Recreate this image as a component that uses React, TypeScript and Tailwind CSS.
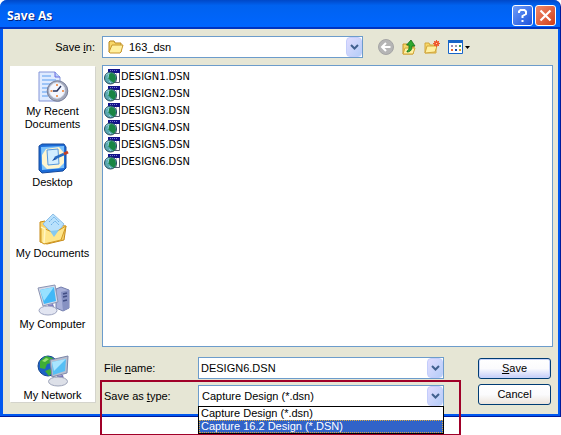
import type { ReactNode } from "react";

const uiFont = "font-['Liberation_Sans',Arial,sans-serif]";
const listFont = "font-['DejaVu_Sans_Condensed','DejaVu_Sans',sans-serif]";

function Chevron() {
  return (
    <span className="pointer-events-none flex h-5 w-4 shrink-0 items-center justify-center rounded-sm border border-[#c3cdfb] bg-linear-to-br from-[#e1dcff] to-[#b4cdf8]">
      <svg width="9" height="6" viewBox="0 0 9 6" fill="none" stroke="#42618f" strokeWidth="2">
        <path d="M1 1l3.500 3.500L8 1" />
      </svg>
    </span>
  );
}

function RecentIcon() {
  return (
    <svg width="32" height="32" viewBox="0 0 32 32">
      <path d="M2 1h16l5 5v24H2z" fill="#dfebff" stroke="#8495d8" />
      <path d="M18 1v5h5" fill="#b8d0fa" stroke="#6c6be0" />
      <path d="M5 5h9M5 9h14M5 13h10M5 17h6M5 21h5M5 25h6" stroke="#86b8f5" strokeWidth="1.500" />
      <circle cx="20.500" cy="20" r="10.300" fill="#a2a8ba" stroke="#757d98" />
      <circle cx="20" cy="19.500" r="7.800" fill="#f4f7ff" stroke="#dce2f0" />
      <path d="M20 13v2M20 24v2M13.500 20h2M25 20h2" stroke="#f08030" strokeWidth="1.500" />
      <path d="M24 15l-4 5h-4" fill="none" stroke="#26335c" strokeWidth="1.500" />
    </svg>
  );
}

function DesktopIcon() {
  return (
    <svg width="32" height="32" viewBox="0 0 32 32">
      <path d="M2 4l3-2 22 0 2 3 0 21-3 3-21 2-3-3z" fill="#1c6cd8" stroke="#164a9c" />
      <path d="M4 5l23-1 0 22-22 2z" fill="#7cc2fb" />
      <path d="M9 7l13-2 5 6 0 10-5 5-12 1-5-5 0-9z" fill="#fff5cf" />
      <path d="M10 8l11-1 1 15-11 1z" fill="#d2edff" stroke="#5799de" />
      <path d="M15 19l3-4 2 2z" fill="#174fa8" />
      <path d="M18 16l9-4" stroke="#276bc2" strokeWidth="2.500" />
      <path d="M27 12l4-2" stroke="#c44023" strokeWidth="3" />
    </svg>
  );
}

function DocumentsIcon() {
  return (
    <svg width="32" height="32" viewBox="0 0 32 32">
      <path d="M3 9l5-1 3 3 18 2-2 14-17 4-7-2z" fill="#f8d36a" stroke="#c78a18" />
      <path d="M6 11L16 1l11 10-9 12z" fill="#b9e1fc" stroke="#8fbfe6" />
      <path d="M12 9l5-5 5 5M14 12l4-4 4 4" stroke="#6aaee5" fill="none" strokeDasharray="2 1" />
      <path d="M4 14l13 6 12-7-5 14-17 4-3-2z" fill="#ffe68c" stroke="#d19a24" />
      <path d="M13 18l4 6 5-7z" fill="#87c9ef" />
      <path d="M4 14l4 2-1 14" fill="none" stroke="#fff6c4" strokeWidth="1.500" />
    </svg>
  );
}

function ComputerIcon() {
  return (
    <svg width="34" height="32" viewBox="0 0 34 32">
      <path d="M20 5l5-2 8 3v18l-6 3-7-3z" fill="#a9b1d9" stroke="#737dac" />
      <path d="M25 8l8-2v18l-6 3z" fill="#8691c2" />
      <path d="M27 10l4-1M27 13l4-1M27 17l4-1" stroke="#414d84" strokeWidth="1.500" />
      <path d="M2 4L19 1l3 17-15 4z" fill="#d3d9e9" stroke="#8b94b3" />
      <path d="M4 6l14-3 2 14-12 3z" fill="#41b8f7" />
      <path d="M4 6l14-3-10 14z" fill="#97e1ff" />
      <path d="M12 21l5-1 2 5-7 1z" fill="#7b7ac2" />
      <ellipse cx="12" cy="26.500" rx="9" ry="4.500" fill="#e2e5f1" stroke="#9da4c0" />
    </svg>
  );
}

function NetworkIcon() {
  return (
    <svg width="32" height="32" viewBox="0 0 32 32">
      <circle cx="11" cy="11" r="10" fill="#1c62c4" stroke="#164791" />
      <path d="M3 6l6-5 7 2-2 5-4 1-2 5-5-1zM8 16l5-2 3 3-4 4z" fill="#3fae35" />
      <path d="M5 6l4-3 3 1-4 3z" fill="#9ce273" />
      <path d="M13 5l18-4-1 17-15 4z" fill="#b8bfd0" stroke="#7d86a8" />
      <path d="M15 7l14-3-1 12-12 4z" fill="#56bff5" />
      <path d="M15 7l14-3-12 12z" fill="#a9e5ff" />
      <path d="M20 21l6-1 1 4-6 1z" fill="#7472b9" />
      <ellipse cx="21" cy="26.500" rx="9.500" ry="4.500" fill="#dde0e8" stroke="#9da4b9" />
    </svg>
  );
}

function FolderIcon() {
  return (
    <svg width="16" height="14" viewBox="0 0 16 14" className="shrink-0">
      <path d="M1 12V2l1-1h4l1 2h6v9z" fill="#f8d768" stroke="#b8861c" />
      <path d="M1 12l3-7h11l-2 7-1 1H2z" fill="#fff0a0" stroke="#c8962a" />
    </svg>
  );
}

function DesignIcon() {
  return (
    <svg width="16" height="16" viewBox="0 0 16 16" className="shrink-0">
      <path d="M4.500 1.500h11v12h-11z" fill="#fff" stroke="#555b70" />
      <path d="M12 4h1v9h-1z" fill="#c4c4c8" />
      <path d="M4 0h12v4H4z" fill="#12128a" />
      <path d="M6 1.500h8" stroke="#7878d0" strokeDasharray="1 1" />
      <circle cx="6.500" cy="9" r="6" fill="#5aa9b0" stroke="#25485c" />
      <path d="M4 5l4-1 3 2 1 4-2 4-3-2-3-3z" fill="#198544" />
      <path d="M2 6l3-2-1 5M5 12l2 2" stroke="#8ed0dc" fill="none" />
    </svg>
  );
}

function BackIcon() {
  return (
    <svg width="16" height="16" viewBox="0 0 16 16">
      <circle cx="8" cy="8" r="7.500" fill="#b5b5b5" stroke="#a5a5a5" />
      <path d="M12.500 8H4M8 4L4 8l4 4" stroke="#fff" strokeWidth="2" fill="none" />
    </svg>
  );
}

function UpIcon() {
  return (
    <svg width="14" height="16" viewBox="0 0 14 16">
      <path d="M1 15V5h4l1 2h6l-1 8z" fill="#f8d768" stroke="#c8962a" />
      <path d="M1 15l2-6h10l-2 6z" fill="#fff0a0" stroke="#d2a73c" />
      <path d="M5 13c4 0 5-3 5-6h3L9 1 4.500 6H7c0 4 0 5-2 6z" fill="#2ea82e" stroke="#14701c" strokeWidth=".8" />
    </svg>
  );
}

function NewFolderIcon() {
  return (
    <svg width="16" height="14" viewBox="0 0 16 14">
      <path d="M1 12V3h4l1 2h6v8H1z" fill="#f8d768" stroke="#d2a73c" />
      <path d="M1 13l2-7h10l-2 6z" fill="#fff0a0" stroke="#d2a73c" />
      <circle cx="12.500" cy="3.500" r="2.500" fill="#f0562c" />
      <path d="M12.500 0v7M9 3.500h7M10 1l5 5M15 1l-5 5" stroke="#f0562c" />
      <path d="M12 3h1v1h-1z" fill="#ffe0a0" />
    </svg>
  );
}

function ViewsIcon() {
  return (
    <svg width="22" height="14" viewBox="0 0 22 14">
      <path d="M.5.5h14v13H.5z" fill="#fff" stroke="#1765c8" />
      <path d="M0 0h15v3H0z" fill="#1765c8" />
      <path d="M3 5h2v2H3z" fill="#9a8ab8" />
      <path d="M7 5h2v2H7z" fill="#a0a0a8" />
      <path d="M11 5h2v2h-2z" fill="#3f9a50" />
      <path d="M3 9h2v2H3z" fill="#e86830" />
      <path d="M7 9h2v2H7z" fill="#1848a8" />
      <path d="M11 9h2v2h-2z" fill="#d8a020" />
      <path d="M17 6h5l-2.500 3z" fill="#000" />
    </svg>
  );
}

const places: { name: string; icon: ReactNode }[] = [
  { name: "My Recent Documents", icon: <RecentIcon /> },
  { name: "Desktop", icon: <DesktopIcon /> },
  { name: "My Documents", icon: <DocumentsIcon /> },
  { name: "My Computer", icon: <ComputerIcon /> },
  { name: "My Network", icon: <NetworkIcon /> },
];

const files = ["DESIGN1.DSN", "DESIGN2.DSN", "DESIGN3.DSN", "DESIGN4.DSN", "DESIGN5.DSN", "DESIGN6.DSN"];

const field = "flex min-w-0 items-center border border-[#6c9ccb] bg-white";
const button =
  "h-[21px] rounded-[3px] border border-[#003c74] bg-linear-to-b from-white via-[#fbfbfd]";

export default function App() {
  return (
    <div className={`min-h-screen overflow-hidden bg-white text-[11px] leading-[13px] text-black ${uiFont}`}>
      <main className="rounded-t-[7px] border-r border-b border-[#001c9c] bg-[#0058f0]">
        <header className="flex h-[29px] items-center rounded-t-[7px] border-b-2 border-[#0034c0] bg-linear-to-b from-[#0048c8] via-[#0062f0] via-20% to-[#0066ff] pr-1 pl-[7px]">
          <h1 className="flex-1 pt-1 font-['Open_Sans','Noto_Sans',sans-serif] text-[12px] font-bold text-white [text-shadow:1px_1px_0_#00207c]">
            Save As
          </h1>
          <div className="flex gap-[2px] pt-[3px]">
            <button aria-label="Help" className="flex size-[21px] items-center justify-center rounded-[3px] border border-white bg-linear-to-br from-[#6f9cf8] to-[#1c50dc]">
              <svg width="11" height="13" viewBox="0 0 11 13" fill="none" stroke="#fff" strokeWidth="2">
                <path d="M2 4V2.500L3.500 1h4L9 2.500V5L5.500 7v2M5.500 11v2" />
              </svg>
            </button>
            <button aria-label="Close" className="flex size-[21px] items-center justify-center rounded-[3px] border border-white bg-linear-to-br from-[#f08868] to-[#d03c14]">
              <svg width="13" height="13" viewBox="0 0 13 13" stroke="#fff" strokeWidth="2.200">
                <path d="M1.500 1.500l10 10M11.500 1.500l-10 10" />
              </svg>
            </button>
          </div>
        </header>

        <div className="mr-[2px] mb-[2px] ml-[3px] bg-[#e6e6d5] pt-[7px] pr-[5px] pb-[7px] pl-[7px]">
          <div className="flex items-center">
            <label htmlFor="folder" className="w-[85px] shrink-0 text-right">
              Save <u>i</u>n:
            </label>
            <div className={`${field} ml-[7px] h-[22px] flex-1 pl-[5px]`}>
              <FolderIcon />
              <select id="folder" className="h-full min-w-0 flex-1 appearance-none pl-[5px] outline-none">
                <option>163_dsn</option>
              </select>
              <Chevron />
            </div>
            <div className="flex w-[190px] shrink-0 items-center pl-[15px]">
              <button aria-label="Back"><BackIcon /></button>
              <button aria-label="Up one level" className="ml-2"><UpIcon /></button>
              <button aria-label="New folder" className="ml-2"><NewFolderIcon /></button>
              <button aria-label="Views" className="ml-2"><ViewsIcon /></button>
            </div>
          </div>

          <div className="mt-[7px] flex items-start gap-[7px]">
            <nav className="mt-px w-[85px] shrink-0 bg-white pt-[5px] shadow-[1px_1px_0_#d4d4cc]">
              {places.map((place) => (
                <button key={place.name} className="flex w-full flex-col items-center gap-[2px] px-2 not-last:h-[71px]">
                  {place.icon}
                  <span className={place.name.length > 16 ? "w-16" : "whitespace-nowrap"}>{place.name}</span>
                </button>
              ))}
            </nav>

            <div className="min-w-0 flex-1">
              <ul className={`min-h-[282px] border border-[#6c9ccb] bg-white pt-[2px] pl-px ${listFont}`}>
                {files.map((file) => (
                  <li key={file} className="flex h-[17px] items-center gap-px">
                    <DesignIcon />
                    {file}
                  </li>
                ))}
              </ul>

              <form className="mt-[10px] flex gap-[34px] pr-[2px]">
                <div className="min-w-0 flex-1">
                  <div className="flex items-center">
                    <label htmlFor="name" className="w-24 shrink-0 pl-[2px]">
                      File <u>n</u>ame:
                    </label>
                    <div className={`${field} h-[22px] flex-1`}>
                      <input id="name" defaultValue="DESIGN6.DSN" className="h-full min-w-0 flex-1 pl-[2px] outline-none" />
                      <Chevron />
                    </div>
                  </div>
                  <div className="relative mt-[6px] flex items-center">
                    <label htmlFor="type" className="w-24 shrink-0 pl-[2px]">
                      Save as <u>t</u>ype:
                    </label>
                    <div className={`${field} relative h-[22px] flex-1`}>
                      <select id="type" className="h-full min-w-0 flex-1 appearance-none pl-[3px] outline-none">
                        <option>Capture Design (*.dsn)</option>
                      </select>
                      <Chevron />
                      <ul role="listbox" aria-label="File types" className="absolute -inset-x-px top-5 border border-black bg-white">
                        <li role="option" aria-selected="false" className="pl-[2px]">Capture Design (*.dsn)</li>
                        <li role="option" aria-selected="true" className="border border-dotted border-[#d8a840] bg-[#3163c8] pl-px leading-[11px] text-white">
                          Capture 16.2 Design (*.DSN)
                        </li>
                      </ul>
                    </div>
                    <div className="pointer-events-none absolute -top-[5px] -right-[17px] -left-[2px] h-14 border-2 border-[#a00028]" />
                  </div>
                </div>
                <div className="mt-px flex w-[73px] shrink-0 flex-col gap-[5px]">
                  <button type="button" className={`${button} to-[#c4ccf8] shadow-[inset_0_0_0_1px_#c8d4fa]`}>
                    <u>S</u>ave
                  </button>
                  <button type="button" className={`${button} to-[#ece4dc]`}>Cancel</button>
                </div>
              </form>
            </div>
          </div>
        </div>
      </main>
    </div>
  );
}
